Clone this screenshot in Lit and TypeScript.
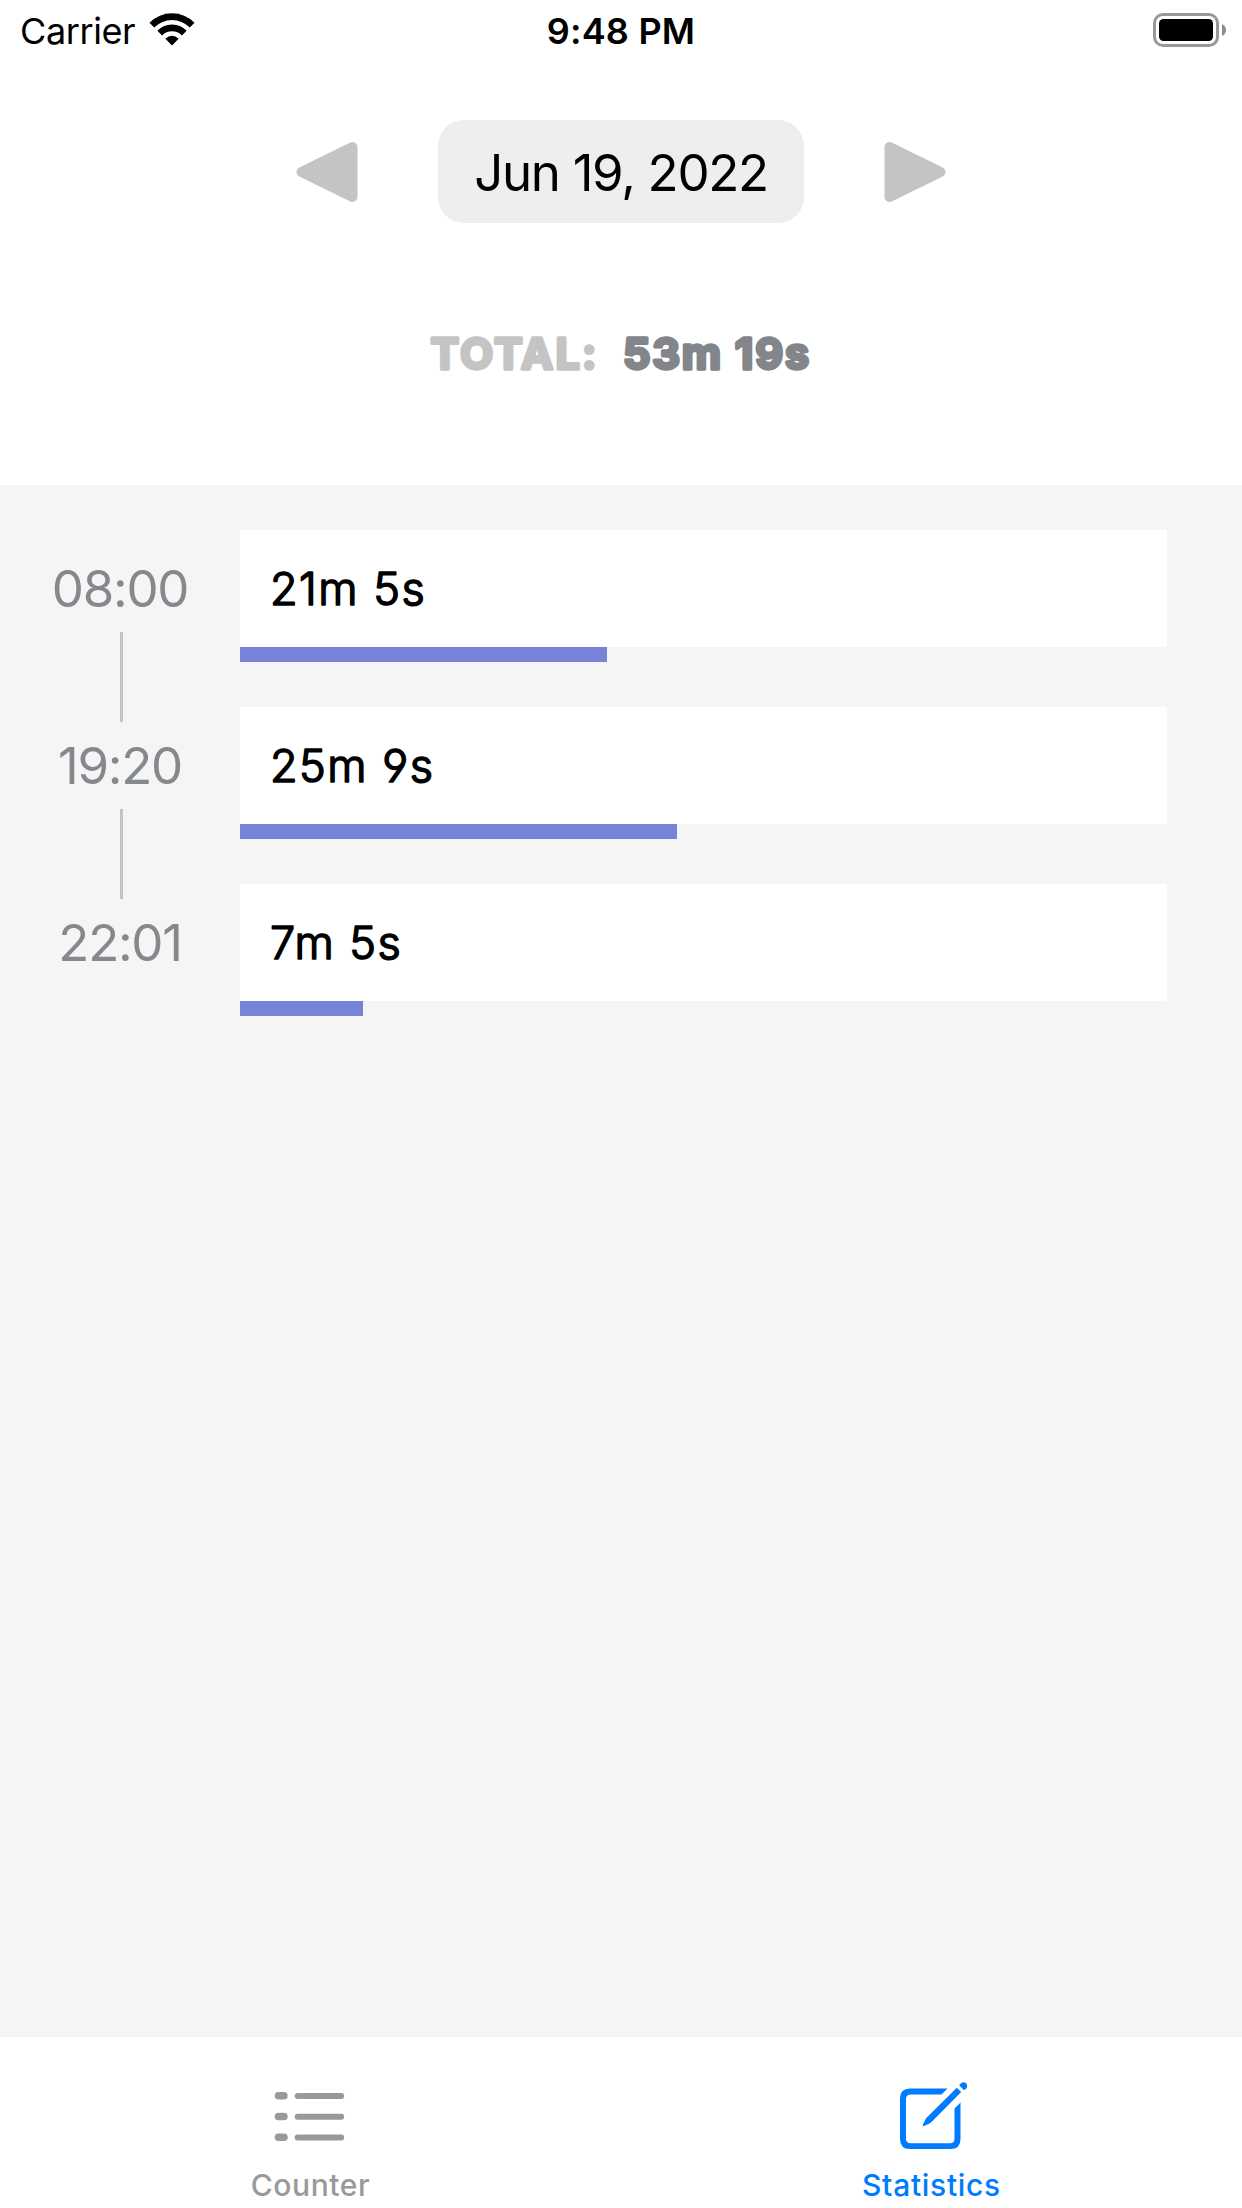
import { LitElement, html, css, svg } from "lit";
import { customElement, property } from "lit/decorators.js";
import { classMap } from "lit/directives/class-map.js";

interface Session {
  start: string;
  duration: string;
  bar: number;
}

const sessions: Session[] = [
  { start: "08:00", duration: "21m 5s", bar: 367 },
  { start: "19:20", duration: "25m 9s", bar: 437 },
  { start: "22:01", duration: "7m 5s", bar: 123 },
];

@customElement("status-bar")
class StatusBar extends LitElement {
  static styles = css`
    :host {
      display: grid;
      grid-template-columns: 1fr auto 1fr;
      align-items: center;
      height: 62px;
      margin-bottom: -2px;
      padding: 0 15px 0 20px;
      box-sizing: border-box;
      color: #000;
      font-size: 36px;
      line-height: 62px;
    }
    .carrier { display: flex; align-items: center; gap: 14px; letter-spacing: -0.4px; }
    .clock { margin-right: 5px; font-weight: 600; letter-spacing: 0.2px; }
    .power { display: flex; justify-content: flex-end; }
    svg { display: block; margin-bottom: 2px; }
  `;
  render() {
    return html`
      <div class="carrier">
        <span class="carrier-name">Carrier</span>
        <svg width="46" height="34" viewBox="0 0 46 34">
          <path d="M0.5 9.8 Q10 0.2 23 0.2 Q36 0.2 45.5 9.8 L40.8 14.4 Q33 6.9 23 6.9 Q13 6.9 5.2 14.4 Z" />
          <path d="M8.4 17.8 Q14.5 11.4 23 11.4 Q31.5 11.4 37.6 17.8 L32.9 22.4 Q28.8 18.3 23 18.3 Q17.2 18.3 13.1 22.4 Z" />
          <path d="M16.4 25.8 Q19.3 22.8 23 22.8 Q26.7 22.8 29.6 25.8 L23 32.6 Z" />
        </svg>
      </div>
      <span class="clock">9:48 PM</span>
      <div class="power">
        <svg width="74" height="34" viewBox="0 0 74 34">
          <rect x="1.5" y="1.5" width="63" height="31" rx="8.5" fill="none" stroke="#999" stroke-width="3" />
          <rect x="6" y="6" width="54" height="22" rx="4.5" />
          <path d="M69 11 Q73 13 73 17 Q73 21 69 23 Z" fill="#8c8c8c" />
        </svg>
      </div>
    `;
  }
}

@customElement("day-header")
class DayHeader extends LitElement {
  static styles = css`
    :host { display: block; height: 425px; padding-top: 60px; box-sizing: border-box; }
    .picker { display: flex; justify-content: center; align-items: center; gap: 80px; }
    .date {
      width: 366px;
      height: 103px;
      border-radius: 26px;
      background: #eee;
      color: #000;
      font-size: 51px;
      line-height: 105px;
      letter-spacing: -1.3px;
      text-align: center;
      white-space: nowrap;
    }
    .arrow { display: block; width: 62px; height: 60px; fill: #c4c4c4; stroke: #c4c4c4; stroke-width: 10; stroke-linejoin: round; }
    .total { display: flex; justify-content: center; margin-top: 100px; }
    .total svg { display: block; height: 60px; overflow: visible; }
    .total text { font-size: 43px; font-weight: 700; stroke-width: 3.4px; stroke-linejoin: round; }
    .label { width: 194px; fill: #c4c4c4; stroke: #c4c4c4; letter-spacing: 2.2px; }
    .value { width: 188px; fill: #82858a; stroke: #82858a; letter-spacing: 1.8px; }
  `;
  render() {
    return html`
      <div class="picker">
        <svg class="arrow" viewBox="0 0 62 60"><path d="M5.5 30 L56.5 5 V55 Z" /></svg>
        <div class="date">Jun 19, 2022</div>
        <svg class="arrow" viewBox="0 0 62 60"><path d="M56.5 30 L5.5 5 V55 Z" /></svg>
      </div>
      <div class="total">
        <svg class="label"><text x="0.5" y="45.5">TOTAL:</text></svg>
        <svg class="value"><text x="-1" y="45.5">53m 19s</text></svg>
      </div>
    `;
  }
}

@customElement("session-row")
class SessionRow extends LitElement {
  @property({ attribute: false }) session!: Session;
  @property({ type: Boolean }) last = false;
  static styles = css`
    :host { display: grid; grid-template-columns: 240px 927px; height: 132px; }
    .when { height: 132px; }
    .start { height: 102px; line-height: 117px; font-size: 51px; letter-spacing: -1.3px; text-align: center; color: #85888d; }
    .link { width: 3px; height: 90px; margin-left: 120px; background: #c4c4c4; }
    .card { height: 117px; padding-left: 30px; box-sizing: border-box; background: #fff; }
    .card svg { display: block; width: 300px; height: 117px; overflow: visible; }
    .card text {
      fill: #000;
      stroke: #000;
      stroke-width: 1.6px;
      stroke-linejoin: round;
      font-size: 45px;
      font-weight: 300;
      letter-spacing: 1.5px;
      font-feature-settings: "cv04";
    }
    .bar { height: 15px; background: #7683d6; }
  `;
  render() {
    return html`
      <div class="when">
        <div class="start">${this.session.start}</div>
        ${this.last ? "" : html`<div class="link"></div>`}
      </div>
      <div class="what">
        <div class="card"><svg><text x="0" y="74.500">${this.session.duration}</text></svg></div>
        <div class="bar" style="width:${this.session.bar}px"></div>
      </div>
    `;
  }
}

@customElement("tab-bar")
class TabBar extends LitElement {
  static styles = css`
    :host { display: grid; grid-template-columns: 1fr 1fr; height: 171px; background: #fff; }
    .tab {
      display: flex;
      flex-direction: column;
      align-items: center;
      padding-top: 43px;
      color: #999;
      font-size: 30px;
      font-weight: 500;
      letter-spacing: 0.6px;
      line-height: 36px;
    }
    .active { color: #007aff; letter-spacing: 0.7px; }
    svg { display: block; margin: 0 2px 9px 0; }
  `;
  private tab(name: string, active: boolean, icon: unknown) {
    return html`<div class=${classMap({ tab: true, active })}>
      <svg width="72" height="78" viewBox="0 0 72 78" fill="currentColor">${icon}</svg>
      <span>${name}</span>
    </div>`;
  }
  render() {
    const list = [16, 36.7, 57.4].map(
      (y) => svg`<rect x="0.7" y=${y - 4} width="13" height="7.6" rx="3.8" /><rect x="20.7" y=${y - 3} width="49.5" height="6" rx="3" />`
    );
    const edit = svg`
      <path d="M52.5 8.5 H15 Q5 8.5 5 18.5 V59 Q5 69 15 69 H55.500 Q65.500 69 65.500 59 V22.500 L59.500 28.500 V58.500 Q59.500 63.200 55 63.200 H15.500 Q11 63.200 11 58.500 V19 Q11 14.500 15.500 14.500 H46.500 Z" />
      <path d="M61.800 7.700 L66.200 12.100 L36.500 42 Q34.500 43.800 28.500 46.300 Q27.300 46.300 27.800 45 Q30.300 39 31.800 37.400 Z" />
      <path d="M64.200 5.300 Q67 0.800 70.600 2.800 Q74 6 70.300 9.400 L68.600 10 Z" />`;
    return html`${this.tab("Counter", false, list)}${this.tab("Statistics", true, edit)}`;
  }
}

@customElement("app-root")
class AppRoot extends LitElement {
  static styles = css`
    :host {
      display: flex;
      flex-direction: column;
      width: 1242px;
      height: 2208px;
      overflow: hidden;
      background: #fff;
      font-family: Inter, "Liberation Sans", sans-serif;
    }
    .sessions {
      flex: 1;
      display: flex;
      flex-direction: column;
      gap: 45px;
      padding-top: 45px;
      background: #f5f5f5;
    }
  `;
  render() {
    return html`
      <status-bar></status-bar>
      <day-header></day-header>
      <main class="sessions">
        ${sessions.map((s, i) => html`<session-row .session=${s} ?last=${i === sessions.length - 1}></session-row>`)}
      </main>
      <tab-bar></tab-bar>
    `;
  }
}
